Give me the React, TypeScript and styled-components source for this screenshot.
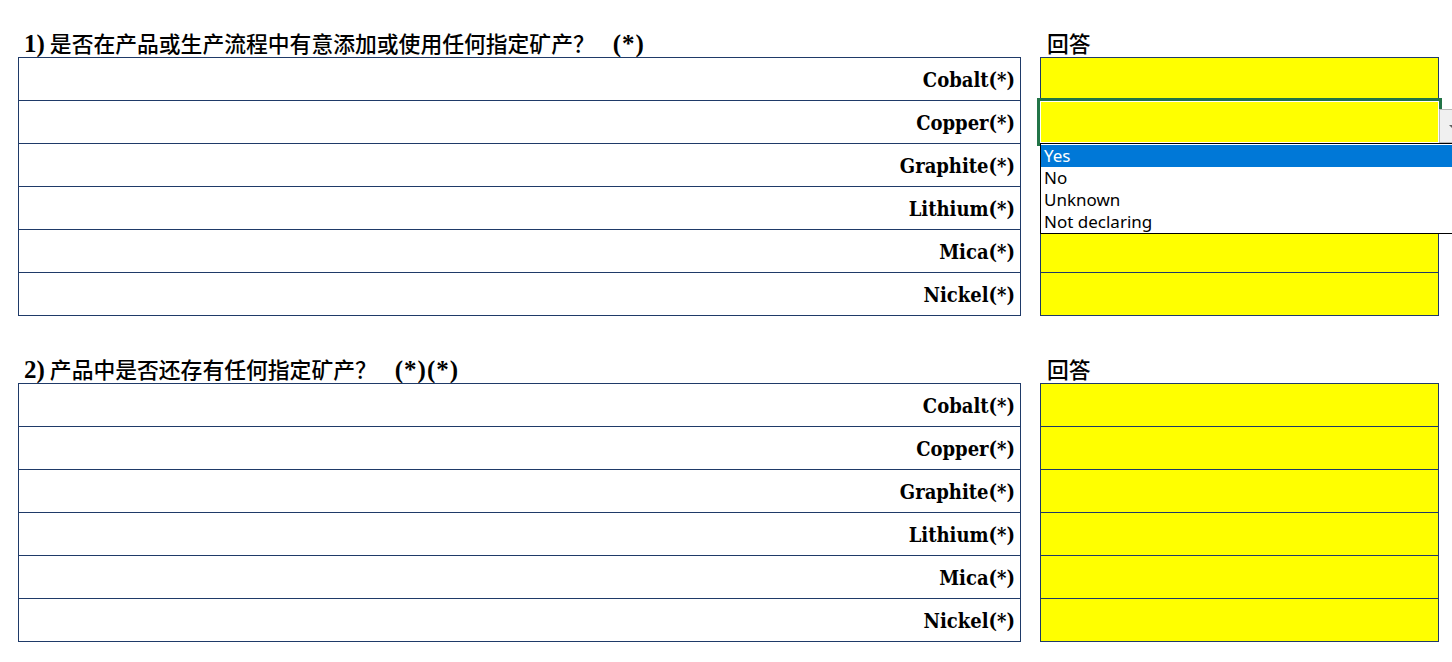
import styled, { createGlobalStyle } from 'styled-components';

const GlobalStyle = createGlobalStyle`
  html, body {
    margin: 0;
    padding: 0;
    background: #ffffff;
    overflow: hidden;
  }
`;

const NAVY = '#1f3a68';

const Page = styled.div`
  width: 1452px;
  height: 662px;
  padding: 30px 0 0 18px;
  box-sizing: border-box;
  display: flex;
  flex-direction: column;
  gap: 40px;
`;

const Section = styled.div`
  display: grid;
  grid-template-columns: 1003px 399px;
  column-gap: 19px;
`;

const Heading = styled.div<{ $indent?: number }>`
  height: 27px;
  padding-left: ${({ $indent }) => $indent ?? 6}px;
  box-sizing: border-box;
  font-family: 'Liberation Serif', 'Noto Sans CJK SC', serif;
  font-weight: bold;
  font-size: 25px;
  line-height: 26px;
  color: #000;
  white-space: nowrap;
`;

const Num = styled.span`
  margin-right: 5px;
`;

const Cjk = styled.span`
  font-family: 'Noto Sans CJK SC', sans-serif;
  font-weight: 500;
  font-size: 21.8px;
`;

const Suffix = styled.span`
  margin-left: 18px;
  letter-spacing: 1px;
`;

const Table = styled.div`
  border: 1px solid ${NAVY};
  display: flex;
  flex-direction: column;
`;

const LabelCell = styled.div`
  height: 43px;
  border-bottom: 1px solid ${NAVY};
  display: flex;
  align-items: center;
  justify-content: flex-end;
  padding: 2px 5px 0 0;
  box-sizing: border-box;
  font-family: 'DejaVu Serif Condensed', 'DejaVu Serif', serif;
  font-stretch: condensed;
  font-weight: bold;
  font-size: 20px;
  color: #000;
  &:last-child {
    border-bottom: none;
    height: 42px;
  }
`;

const AnswerCell = styled.div`
  position: relative;
  height: 43px;
  box-sizing: border-box;
  background: #ffff00;
  border-bottom: 1px solid ${NAVY};
  &:last-child {
    border-bottom: none;
    height: 42px;
  }
`;

const Selection = styled.div`
  position: absolute;
  top: -3px;
  left: -4px;
  right: -4px;
  bottom: -3px;
  border: 3px solid #227447;
  box-shadow: inset 0 0 0 1px #ffffff;
  z-index: 2;
`;

const DropButton = styled.div`
  position: absolute;
  top: 8px;
  left: calc(100% + 1px);
  width: 20px;
  height: 34px;
  background: #f0f0f0;
  border: 1px solid #b9b9b9;
  box-sizing: border-box;
  z-index: 3;
  &::after {
    content: '';
    position: absolute;
    left: 9px;
    top: 15px;
    border-left: 3px solid transparent;
    border-right: 3px solid transparent;
    border-top: 3px solid #606060;
  }
`;

const DropList = styled.ul`
  position: absolute;
  top: 42px;
  left: -1px;
  width: 440px;
  margin: 0;
  padding: 1px 0 0 0;
  list-style: none;
  background: #ffffff;
  border: 1px solid #000;
  z-index: 4;
`;

const DropItem = styled.li<{ $active?: boolean }>`
  height: 22px;
  line-height: 22px;
  padding-left: 3px;
  font-family: 'Noto Sans', 'Open Sans', sans-serif;
  font-size: 17px;
  color: ${({ $active }) => ($active ? '#ffffff' : '#000000')};
  background: ${({ $active }) => ($active ? '#0078d7' : 'transparent')};
`;

const minerals = ['Cobalt(*)', 'Copper(*)', 'Graphite(*)', 'Lithium(*)', 'Mica(*)', 'Nickel(*)'];
const options = ['Yes', 'No', 'Unknown', 'Not declaring'];

type QuestionProps = {
  num: string;
  text: string;
  suffix: string;
  openRow?: number;
};

const Question = ({ num, text, suffix, openRow }: QuestionProps) => (
  <Section>
    <Heading>
      <Num>{num}</Num>
      <Cjk>{text}</Cjk>
      <Suffix>{suffix}</Suffix>
    </Heading>
    <Heading $indent={7}>
      <Cjk>回答</Cjk>
    </Heading>
    <Table>
      {minerals.map((m) => (
        <LabelCell key={m}>{m}</LabelCell>
      ))}
    </Table>
    <Table>
      {minerals.map((m, i) => (
        <AnswerCell key={m}>
          {openRow === i && (
            <>
              <Selection />
              <DropButton />
              <DropList>
                {options.map((o, j) => (
                  <DropItem key={o} $active={j === 0}>
                    {o}
                  </DropItem>
                ))}
              </DropList>
            </>
          )}
        </AnswerCell>
      ))}
    </Table>
  </Section>
);

export default function App() {
  return (
    <>
      <GlobalStyle />
      <Page>
        <Question num="1)" text="是否在产品或生产流程中有意添加或使用任何指定矿产？" suffix="(*)" openRow={1} />
        <Question num="2)" text="产品中是否还存有任何指定矿产？" suffix="(*)(*)" />
      </Page>
    </>
  );
}
